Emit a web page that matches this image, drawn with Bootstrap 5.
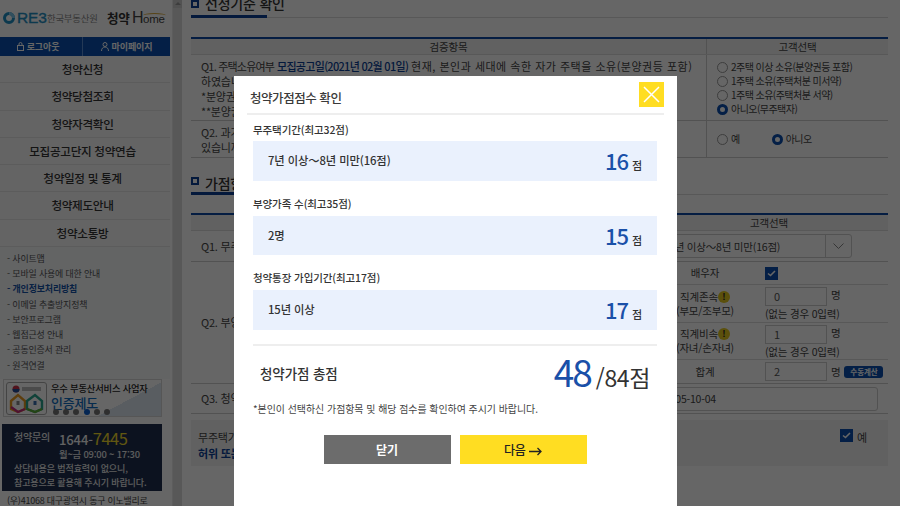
<!doctype html>
<html lang="ko">
<head>
<meta charset="utf-8">
<title>청약Home</title>
<link href="https://cdn.jsdelivr.net/npm/bootstrap@5.3.0/dist/css/bootstrap.min.css" rel="stylesheet">
<style>
html,body{height:506px;overflow:hidden;background:#fff}
body{font-family:"Noto Sans CJK KR","Noto Sans",sans-serif;font-size:11px;color:#444;letter-spacing:-.2px;line-height:15px}
.shell{height:506px;overflow:hidden}
.side{width:170px;flex:none}
.logo-row{height:37px;padding:9px 0 0 3px;white-space:nowrap}
.logo-reb{font:400 15.5px/18px "Liberation Sans",sans-serif;color:#1f8fc4;letter-spacing:-.2px;width:30px;margin-left:2px;-webkit-text-stroke:.4px #1f8fc4;flex:none}
.logo-org{font-size:9.4px;color:#8a8a8a;line-height:18px;letter-spacing:-.2px;width:60px;flex:none}
.logo-ch{font-size:12.6px;font-weight:700;color:#333;line-height:18px;letter-spacing:-.4px;width:25px;flex:none}
.logo-ho{font:400 16px/18px "Liberation Sans",sans-serif;color:#444;letter-spacing:-.5px}
.logo-ome{font-size:11.5px;position:relative;letter-spacing:-.3px}
.logo-ome::before{content:"";position:absolute;left:0;right:-1px;top:0;height:5px;border-top:1.5px solid #d9a93a;border-radius:50% 50% 0 0}
.auth-bar{height:19px;background:#0a4fae;color:#fff;font-size:9px;font-weight:700;line-height:19px;letter-spacing:-.1px}
.auth-a{width:82px;flex:none;text-align:center;padding-right:6px}
.auth-b{flex:1;text-align:center;border-left:1px solid #5a8fd8}
.auth-bar svg{vertical-align:-1px;margin-right:3px}
.menu-item{height:27.3px;line-height:26px;background:#f9f9f9;border-bottom:1px solid #e6e6e6;text-align:center;font-size:11.6px;font-weight:500;color:#333;letter-spacing:-.3px;padding-right:5px}
.menu-item:last-of-type{border-bottom:0}
.foot-links{background:#f7f9fb;padding:4px 0 0 7px;height:132px;list-style:none;margin:0;font-size:8.95px;line-height:15.2px;letter-spacing:-.15px;color:#555}
.foot-links .on{color:#1553a8;font-weight:700}
.cert{margin:0 8px 0 3px;height:38px;border:1px solid #d8d8d8;background:linear-gradient(152deg,#fff 72%,#dfe9f2 72%);padding:2px;gap:4px;position:relative}
.cert-ico{width:41px;height:33px;flex:none;border:1px solid #aaa;border-radius:3px;background:#fff}
.cert-t1{font-size:9.3px;font-weight:500;color:#222;line-height:13px;letter-spacing:-.2px}
.cert-t2{font-size:13px;font-weight:500;color:#0d6cc0;line-height:14px;letter-spacing:-.2px;margin-top:1px}
.dots{gap:4.2px;position:absolute;left:49px;bottom:1px}
.dots i{width:6px;height:6px;border-radius:50%;background:#777;display:block}
.dots i.on{background:#0a5fd0}
.callbox{margin:7px 8px 0 2px;height:67px;background:#1f2f4e;color:#e9e9e9;padding:4px 0 0 12px}
.call-top{height:22px}
.call-t{font-size:10px;font-weight:500;line-height:18px;width:45px;flex:none}
.call-n{font-size:13px;line-height:20px;letter-spacing:-.1px;color:#f4f4f4;font-weight:500;white-space:nowrap}
.call-n b{font-size:16.5px;color:#f2d92b;font-weight:400;letter-spacing:-.5px}
.call-h{font-size:9.4px;line-height:13px;padding-left:45px;margin-top:-2px;font-weight:500}
.call-m{font-size:9px;line-height:13.5px;margin-top:1px;letter-spacing:-.1px;font-weight:500}
.addr{padding:2px 0 0 7px;font-size:8.95px;white-space:nowrap}
.sbar{width:10px;flex:none;margin-left:2px;background:#ccc;border-left:1px solid #e8e8e8;position:relative;padding-top:8px}
.sbar span{display:block;height:100%;background:#dcdcdc}
.sbar em{position:absolute;left:2px;top:2px;border:3px solid transparent;border-bottom-color:#999;border-top:0}
.pane{flex:1;padding:0 12px 0 9px;min-width:0}
.sec-h{position:relative;border-bottom:1px solid #ddd;font-size:14px;font-weight:500;color:#333;line-height:14px;gap:6px}
.sec-h::after{content:"";position:absolute;left:0;bottom:-1px;width:76px;height:3px;background:#0a3f96}
.sq{width:8px;height:8px;border:2px solid #0a3f96;display:block;flex:none;margin-top:1px}
.first-h{margin-top:-4px;height:22px}
.first-h .sq{margin-top:4px}
.next-h{margin-top:12px;height:25px;padding-top:6px}
.tb{border-top:2px solid #0e4aa5;margin-top:18px}
.tb-first{margin-top:19px}
.tb-h{height:16px;background:#f2f2f2;border-bottom:1px solid #ddd;line-height:15px;text-align:center;font-size:10.5px}
.rw{border-bottom:1px solid #ccc}
.c-q{padding:4px 10px;font-size:11px;line-height:15px}
.c-r1{width:182px;flex:none;border-left:1px solid #ccc;padding:5px 10px;font-size:10px;line-height:14px;letter-spacing:-.55px}
.hd-r1{width:182px;flex:none;border-left:1px solid #ccc}
.rd{width:11px;height:11px;border:1px solid #999;border-radius:50%;display:inline-block;background:#fff;vertical-align:-2px;margin-right:3px}
.rd.on{border:3px solid #0a4fae}
.blu{color:#0a3f96;font-weight:500}
.tighter{letter-spacing:-.8px}
.tight{letter-spacing:-.7px}
.loose{letter-spacing:.5px}
.tag{display:inline-block;background:#0a4fae;width:36px;height:12px;border-radius:4px;vertical-align:middle}
.c-r2{width:238px;flex:none}
.tf{border:1px solid #ccc;background:#fff;height:19px;width:62px;line-height:17px;padding-left:8px;font-size:11px;color:#555;flex:none}
.sl{width:102px;flex:none;text-align:center;font-size:10.5px;line-height:14px;padding-left:8px}
.sv{flex:1;padding:2px 0 0 13px;font-size:10.5px;min-width:0}
.exc{display:inline-block;width:12px;height:12px;border-radius:50%;background:#e4c91e;color:#222;font-size:9px;line-height:12px;text-align:center;font-weight:700;vertical-align:1px;letter-spacing:0}
.cb{width:13px;height:13px;background:#0a4fae;display:block;flex:none}
.calc-btn{background:#0a4fae;color:#fff;font-size:7.5px;line-height:12px;border-radius:3px;font-weight:700;width:39px;height:12px;text-align:center;letter-spacing:-.1px;white-space:nowrap;flex:none}
.pick{height:24px;border:1px solid #ccc;border-radius:3px;font-size:10.5px;background:#fff;width:100%}
.pick-arrow{width:26px;height:22px;border-left:1px solid #ccc;flex:none}
.agree{margin-top:6px;height:46px;background:#f3f3f3;padding:9px 21px 0 7px;font-size:11px;line-height:16px}
/* modal */
.scrim.modal-backdrop.show{opacity:.6;background:#000}
.modal.pop{display:block;overflow:hidden}
.pop .modal-dialog{margin:76px 0 0 234px;width:443px;max-width:none;transform:none}
.pop .modal-content{border:0;border-radius:0;height:470px;padding:6px 13px 0;color:#333;display:block;font-size:11px;letter-spacing:-.1px}
.m-head{height:31px;border-bottom:2px solid #eee;box-sizing:content-box;position:relative;font-size:12.5px;font-weight:500;line-height:32px;padding-left:3px;color:#3a3a3a;letter-spacing:-.45px}
.m-x{width:25px;height:25px;background:#ffdd22;position:absolute;right:0;top:0;border:0;padding:0;display:flex;align-items:center;justify-content:center}
.m-sect{padding:0 7px 0 6px}
.m-lab{height:26px;padding-top:7px;font-size:10.5px;font-weight:500;line-height:15px}
.m-lab2{height:35px;padding-top:15px}
.m-box{height:39.5px;background:#eaf1fd;padding:0 15px;font-size:11.3px;font-weight:500;color:#333}
.m-num{font-size:22px;font-weight:500;color:#1a50a8;letter-spacing:-1px;line-height:24px}
.m-unit{font-size:11px;margin-left:4px;font-weight:500}
.m-total-wrap{margin:0 7px 0 6px}
.m-total{border-top:2px solid #eee;margin-top:14px;height:54px;padding:0 7px;color:#333}
.m-total-l{font-size:13.5px;font-weight:500;padding-top:20px;letter-spacing:-.1px}
.m-total-r{font-size:23px;line-height:50px;letter-spacing:-.4px}
.m-total-r b{font-size:37px;font-weight:400;color:#1a50a8;letter-spacing:-2px;margin-right:5px}
.m-note{font-size:9.95px;line-height:14px;margin-top:4px;color:#444;letter-spacing:-.02px}
.m-btns{gap:9px;margin-top:19px;justify-content:center}
.m-btn{width:127px;height:29px;border:0;border-radius:0;font-size:12px;font-weight:700;line-height:29px;padding:0;letter-spacing:-.1px}
.m-btn.g{background:#6c6c6c;color:#fff}
.m-btn.y{background:#ffdd22;color:#222;font-weight:500}
</style>
</head>
<body>
<div class="shell d-flex">
  <aside class="side">
    <div class="logo-row d-flex">
      <svg width="12" height="18" viewBox="0 0 12 18" aria-hidden="true"><circle cx="6" cy="9" r="4.5" fill="none" stroke="#1f8fc4" stroke-width="3"/><path d="M6 4.500a4.500 4.500 0 0 1 4.500 4.500" fill="none" stroke="#7cc6ea" stroke-width="3"/></svg>
      <span class="logo-reb">RE3</span>
      <span class="logo-org">한국부동산원</span>
      <span class="logo-ch">청약</span>
      <span class="logo-ho">H<span class="logo-ome">ome</span></span>
    </div>
    <div class="auth-bar d-flex">
      <div class="auth-a"><svg width="7" height="9" viewBox="0 0 7 9" aria-hidden="true"><rect x=".5" y="3.500" width="6" height="5" fill="none" stroke="#fff"/><path d="M2 3.500V2a1.500 1.500 0 0 1 3 0v1.500" fill="none" stroke="#fff"/></svg>로그아웃</div>
      <div class="auth-b"><svg width="8" height="9" viewBox="0 0 8 9" aria-hidden="true"><circle cx="4" cy="2.500" r="2" fill="none" stroke="#fff"/><path d="M.5 9C.5 6.500 2 5 4 5s3.500 1.500 3.500 4" fill="none" stroke="#fff"/></svg>마이페이지</div>
    </div>
    <div class="menu-item">청약신청</div>
    <div class="menu-item">청약당첨조회</div>
    <div class="menu-item">청약자격확인</div>
    <div class="menu-item">모집공고단지 청약연습</div>
    <div class="menu-item">청약일정 및 통계</div>
    <div class="menu-item">청약제도안내</div>
    <div class="menu-item">청약소통방</div>
    <ul class="foot-links">
      <li>- 사이트맵</li>
      <li>- 모바일 사용에 대한 안내</li>
      <li class="on">- 개인정보처리방침</li>
      <li>- 이메일 추출방지정책</li>
      <li>- 보안프로그램</li>
      <li>- 웹접근성 안내</li>
      <li>- 공동인증서 관리</li>
      <li>- 원격연결</li>
    </ul>
    <div class="cert d-flex">
      <div class="cert-ico">
        <svg width="39" height="31" viewBox="0 0 39 31" aria-hidden="true">
          <circle cx="9" cy="6" r="3.500" fill="#c9304a"/><path d="M5.500 6a3.500 3.500 0 0 0 7 0z" fill="#1f4f9c"/>
          <rect x="15" y="4" width="19" height="4" fill="#bbb"/>
          <path d="M4 18l7-6 7 6v8l-7 3-7-3z" fill="none" stroke="#e89a20" stroke-width="2.400"/>
          <path d="M20 18l8-6 7 6v8l-7 3-8-3z" fill="none" stroke="#2aa58e" stroke-width="2.400"/>
          <path d="M4 24l7 5 7-3" fill="none" stroke="#c42f7a" stroke-width="2.400"/>
          <path d="M20 26l8 3 7-3" fill="none" stroke="#5aaa35" stroke-width="2.400"/>
          <rect x="9.500" y="18" width="3" height="4" fill="#888"/><rect x="26.500" y="18" width="3" height="4" fill="#3a6fb0"/>
        </svg>
      </div>
      <div>
        <div class="cert-t1">우수 부동산서비스 사업자</div>
        <div class="cert-t2">인증제도</div>
      </div>
      <div class="dots d-flex"><i></i><i></i><i></i><i class="on"></i><i></i><i></i></div>
    </div>
    <div class="callbox">
      <div class="d-flex call-top"><div class="call-t">청약문의</div><div class="call-n">1644-<b>7445</b></div></div>
      <div class="call-h">월~금 09:00 ~ 17:30</div>
      <div class="call-m">상담내용은 법적효력이 없으니,<br>참고용으로 활용해 주시기 바랍니다.</div>
    </div>
    <div class="addr">(우)41068 대구광역시 동구 이노밸리로</div>
  </aside>
  <div class="sbar"><em></em><span></span></div>
  <main class="pane">
    <div class="sec-h first-h d-flex"><i class="sq"></i><span>선정기준 확인</span></div>
    <div class="tb tb-first">
      <div class="d-flex tb-h"><div class="flex-grow-1">검증항목</div><div class="hd-r1">고객선택</div></div>
      <div class="d-flex rw" style="height:66px">
        <div class="c-q flex-grow-1 text-nowrap"><span class="tighter">Q1. 주택소유여부</span> <span class="blu tight">모집공고일(2021년 02월 01일)</span> <span class="loose">현재, 본인과 세대에 속한 자가 주택을 소유(분양권등 포함)</span><br>하였습니까? <span class="tag"></span><br>*분양권<br>**분양권</div>
        <div class="c-r1">
          <div><i class="rd"></i>2주택 이상 소유(분양권등 포함)</div>
          <div><i class="rd"></i>1주택 소유(주택처분 미서약)</div>
          <div><i class="rd"></i>1주택 소유(주택처분 서약)</div>
          <div><i class="rd on"></i>아니오(무주택자)</div>
        </div>
      </div>
      <div class="d-flex rw" style="height:37px">
        <div class="c-q flex-grow-1 text-nowrap">Q2. 과거 5년 이내에 본인 또는 세대에 속한 자가 청약에 당첨된 자가<br>있습니까?</div>
        <div class="c-r1 d-flex align-items-center gap-4 py-0"><span><i class="rd"></i>예</span><span class="ms-2"><i class="rd on"></i>아니오</span></div>
      </div>
    </div>
    <div class="sec-h next-h d-flex"><i class="sq"></i><span>가점항목</span></div>
    <div class="tb">
      <div class="d-flex tb-h"><div class="flex-grow-1">검증항목</div><div class="c-r2">고객선택</div></div>
      <div class="d-flex rw" style="height:31px">
        <div class="c-q flex-grow-1 pt-2">Q1. 무주택기간</div>
        <div class="c-r2 d-flex align-items-center" style="padding:0 36px 0 18px"><div class="pick d-flex align-items-center"><span class="flex-grow-1">7년 이상～8년 미만(16점)</span><span class="pick-arrow d-flex align-items-center justify-content-center"><svg width="11" height="6" viewBox="0 0 11 6"><path d="M.5.5l5 5 5-5" fill="none" stroke="#888"/></svg></span></div></div>
      </div>
      <div class="d-flex rw" style="height:122px">
        <div class="c-q flex-grow-1 align-self-center">Q2. 부양가족 수</div>
        <div class="c-r2">
          <div class="d-flex align-items-center rw" style="height:23px;border-color:#ddd"><div class="sl">배우자</div><div class="sv pt-0"><i class="cb d-flex align-items-center justify-content-center"><svg width="9" height="7" viewBox="0 0 9 7"><path d="M1 3.500l2.500 2L8 1" fill="none" stroke="#fff" stroke-width="1.600"/></svg></i></div></div>
          <div class="d-flex rw" style="height:38px;border-color:#ddd"><div class="sl align-self-center">직계존속<span class="exc">!</span><br>(부모/조부모)</div><div class="sv"><div class="d-flex gap-1"><div class="tf">0</div><span>명</span></div><div>(없는 경우 0입력)</div></div></div>
          <div class="d-flex rw" style="height:37px;border-color:#ddd"><div class="sl align-self-center">직계비속<span class="exc">!</span><br>(자녀/손자녀)</div><div class="sv"><div class="d-flex gap-1"><div class="tf">1</div><span>명</span></div><div>(없는 경우 0입력)</div></div></div>
          <div class="d-flex align-items-center" style="height:23px"><div class="sl">합계</div><div class="sv pt-0 d-flex gap-1 align-items-center"><div class="tf">2</div><span>명</span><span class="calc-btn">수동계산</span></div></div>
        </div>
      </div>
      <div class="d-flex rw" style="height:30px">
        <div class="c-q flex-grow-1 align-self-center py-0">Q3. 청약통장 가입일</div>
        <div class="c-r2 d-flex align-items-center" style="padding:0 10px 0 13px"><div class="pick" style="line-height:22px">2005-10-04</div></div>
      </div>
    </div>
    <div class="agree d-flex justify-content-between">
      <div class="text-nowrap">무주택기간, 부양가족 수, 청약통장 가입기간을 정확히 입력하였습니까?<br><span class="blu fw-bold">허위 또는 착오 입력 시 불이익을 받을 수 있습니다.</span></div>
      <div class="d-flex gap-1 align-items-start"><i class="cb d-flex align-items-center justify-content-center"><svg width="9" height="7" viewBox="0 0 9 7"><path d="M1 3.500l2.500 2L8 1" fill="none" stroke="#fff" stroke-width="1.600"/></svg></i><span>예</span></div>
    </div>
  </main>
</div>

<div class="modal-backdrop show scrim"></div>
<div class="modal pop" role="dialog" aria-modal="true">
  <div class="modal-dialog">
    <div class="modal-content">
      <div class="m-head">청약가점점수 확인
        <button class="m-x" type="button" aria-label="닫기"><svg width="17" height="17" viewBox="0 0 17 17"><path d="M1 1l15 15M16 1L1 16" stroke="#fff" stroke-width="1.500" fill="none"/></svg></button>
      </div>
      <div class="m-sect">
        <div class="m-lab">무주택기간(최고32점)</div>
        <div class="m-box d-flex justify-content-between align-items-center"><span>7년 이상～8년 미만(16점)</span><span><span class="m-num">16</span><span class="m-unit">점</span></span></div>
        <div class="m-lab m-lab2">부양가족 수(최고35점)</div>
        <div class="m-box d-flex justify-content-between align-items-center"><span>2명</span><span><span class="m-num">15</span><span class="m-unit">점</span></span></div>
        <div class="m-lab m-lab2">청약통장 가입기간(최고17점)</div>
        <div class="m-box d-flex justify-content-between align-items-center"><span>15년 이상</span><span><span class="m-num">17</span><span class="m-unit">점</span></span></div>
      </div>
      <div class="m-total-wrap">
        <div class="m-total d-flex justify-content-between">
          <div class="m-total-l">청약가점 총점</div>
          <div class="m-total-r"><b>48</b>/84점</div>
        </div>
        <div class="m-note">*본인이 선택하신 가점항목 및 해당 점수를 확인하여 주시기 바랍니다.</div>
        <div class="m-btns d-flex">
          <button type="button" class="btn m-btn g">닫기</button>
          <button type="button" class="btn m-btn y">다음 <svg width="13" height="9" viewBox="0 0 13 9" aria-hidden="true"><path d="M0 4.500h12M8.500 1l3.500 3.500L8.500 8" fill="none" stroke="#222" stroke-width="1.300"/></svg></button>
        </div>
      </div>
    </div>
  </div>
</div>
<script src="https://cdn.jsdelivr.net/npm/bootstrap@5.3.0/dist/js/bootstrap.bundle.min.js"></script>
</body>
</html>
